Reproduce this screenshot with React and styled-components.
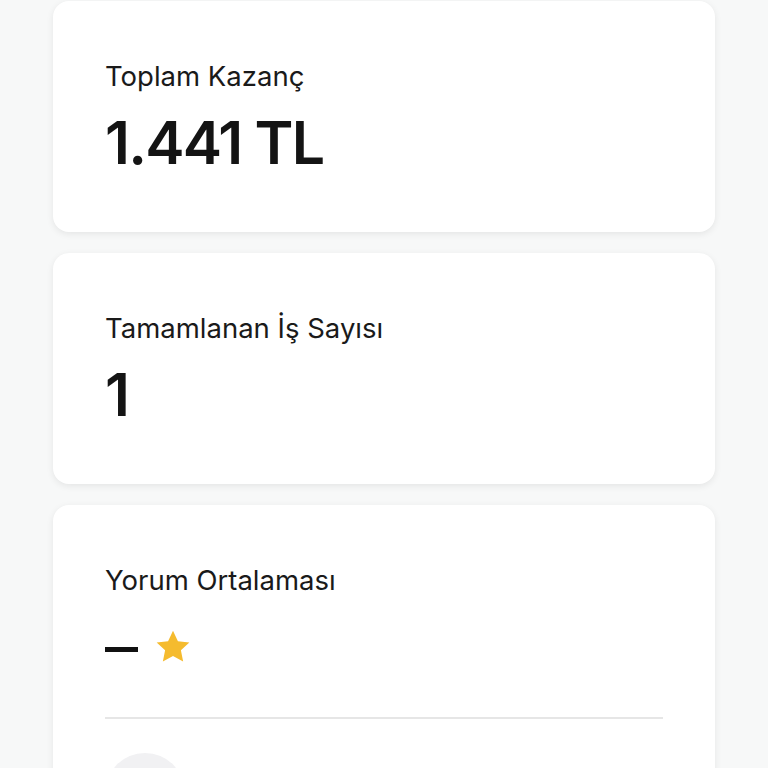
import React from 'react';
import styled, { createGlobalStyle } from 'styled-components';

const GlobalStyle = createGlobalStyle`
  html, body {
    margin: 0;
    padding: 0;
    background-color: #f7f8f8;
    font-family: Inter, "Noto Sans", sans-serif;
    color: #141414;
  }
`;

const Page = styled.div`
  display: flex;
  flex-direction: column;
  gap: 21px;
  padding: 1px 53px 40px;
`;

const Card = styled.div`
  background-color: #ffffff;
  border-radius: 16px;
  box-shadow: 0 2px 7px rgba(0, 0, 0, 0.08);
  padding: 58px 52px 60px;
  display: flex;
  flex-direction: column;
`;

const Label = styled.div`
  font-size: 27.5px;
  line-height: 34px;
  font-weight: 400;
  color: #1a1a1a;
`;

const Value = styled.div`
  margin-top: 20px;
  min-height: 59px;
  font-size: 59px;
  line-height: 59px;
  font-weight: 600;
  letter-spacing: -1.8px;
  display: flex;
  align-items: center;
  gap: 15px;
`;

const Dash = styled.span`
  display: block;
  width: 33px;
  height: 5px;
  background-color: #111111;
  margin-top: 6px;
`;

const Star = styled.svg`
  width: 40px;
  height: 40px;
  fill: #f5bb2e;
`;

const Divider = styled.hr`
  border: none;
  height: 2px;
  background-color: #e6e6e6;
  margin: 41px 0 0;
`;

const Avatar = styled.div`
  margin-top: 34px;
  width: 80px;
  height: 80px;
  border-radius: 50%;
  background-color: #f1f1f3;
`;

function StatCard({ label, children }) {
  return (
    <Card>
      <Label>{label}</Label>
      <Value>{children}</Value>
    </Card>
  );
}

export default function App() {
  return (
    <>
      <GlobalStyle />
      <Page>
        <StatCard label="Toplam Kazanç">1.441 TL</StatCard>
        <StatCard label="Tamamlanan İş Sayısı">1</StatCard>
        <Card>
          <Label>Yorum Ortalaması</Label>
          <Value>
            <Dash />
            <Star viewBox="0 0 24 24">
              <path d="M12 2.2l2.95 6.28 6.85.82-5.06 4.7 1.34 6.77L12 17.4l-6.08 3.37 1.34-6.77-5.06-4.7 6.85-.82z" />
            </Star>
          </Value>
          <Divider />
          <Avatar />
        </Card>
      </Page>
    </>
  );
}
